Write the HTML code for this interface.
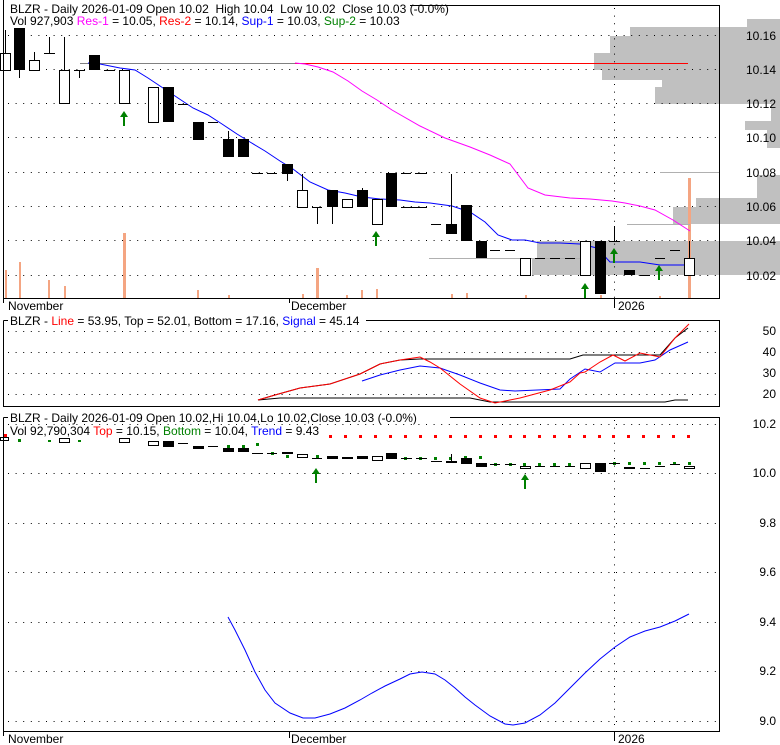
<!DOCTYPE html>
<html><head><meta charset="utf-8"><style>
html,body{margin:0;padding:0;background:#fff;}
svg{display:block;font-family:"Liberation Sans",Arial,sans-serif;font-size:12px;}
.pre{white-space:pre;}
</style></head><body>
<svg width="780" height="745" viewBox="0 0 780 745" xmlns="http://www.w3.org/2000/svg">
<rect width="780" height="745" fill="#fff"/>
<g fill="#c0c0c0">
<rect x="747" y="19" width="33" height="8"/>
<rect x="630" y="27" width="150" height="9"/>
<rect x="610" y="36" width="170" height="17"/>
<rect x="594" y="53" width="186" height="17"/>
<rect x="602" y="70" width="178" height="10"/>
<rect x="662" y="80" width="118" height="7"/>
<rect x="655" y="87" width="125" height="17"/>
<rect x="771" y="104" width="9" height="17"/>
<rect x="745" y="121" width="35" height="9"/>
<rect x="767" y="130" width="13" height="18"/>
<rect x="757" y="175" width="23" height="23"/>
<rect x="696" y="198" width="84" height="9"/>
<rect x="673" y="207" width="107" height="17"/>
<rect x="537" y="241" width="243" height="17"/>
<rect x="532" y="258" width="248" height="17"/>
</g>
<g stroke="#000" stroke-dasharray="1 6.6" stroke-width="1">
<line x1="8" y1="35.5" x2="719" y2="35.5"/>
<line x1="8" y1="69.5" x2="719" y2="69.5"/>
<line x1="8" y1="103.5" x2="719" y2="103.5"/>
<line x1="8" y1="137.5" x2="719" y2="137.5"/>
<line x1="8" y1="172.5" x2="719" y2="172.5"/>
<line x1="8" y1="206.5" x2="719" y2="206.5"/>
<line x1="8" y1="240.5" x2="719" y2="240.5"/>
<line x1="8" y1="275.5" x2="719" y2="275.5"/>
<line x1="614.5" y1="8" x2="614.5" y2="298"/>
</g>
<g fill="#f4a582">
<rect x="123" y="233" width="3" height="65"/>
<rect x="316" y="268" width="3" height="30"/>
<rect x="688" y="178" width="3" height="120"/>
<rect x="5" y="270" width="2" height="28"/><rect x="19" y="262" width="2" height="36"/>
<rect x="48" y="280" width="2" height="18"/><rect x="64" y="286" width="2" height="12"/>
<rect x="228" y="295" width="2" height="3"/><rect x="302" y="294" width="2" height="4"/>
<rect x="346" y="295" width="2" height="3"/><rect x="361" y="290" width="2" height="8"/>
<rect x="376" y="289" width="2" height="9"/><rect x="451" y="294" width="2" height="4"/>
<rect x="466" y="293" width="2" height="5"/><rect x="525" y="295" width="2" height="3"/>
<rect x="600" y="295" width="2" height="3"/><rect x="659" y="296" width="2" height="2"/>
<rect x="197" y="290" width="2" height="8"/>
</g>
<line x1="80" y1="63.5" x2="688" y2="63.5" stroke="#808080"/>
<line x1="295" y1="63.5" x2="688" y2="63.5" stroke="#ff0000"/>
<line x1="429" y1="258.5" x2="580" y2="258.5" stroke="#b0b0b0"/>
<line x1="627" y1="224.5" x2="690" y2="224.5" stroke="#b0b0b0"/>
<line x1="660" y1="172.5" x2="719" y2="172.5" stroke="#b0b0b0"/>
<polyline fill="none" stroke="#ff00ff" points="295,63 305,64 318,67 333,72 348,81 362,91 377,100 392,110 420,126 445,138 470,147 490,155 510,164 528,188 545,195 570,198 590,199 612,201 625,203 640,206 655,210 673,220 690,231"/>
<polyline fill="none" stroke="#0000ff" points="88,63 100,64 120,68 135,70 148,78 163,88 178,98 193,108 208,115 222,124 237,134 250,142 265,151 280,161 293,169 310,182 328,190 345,193 362,197 380,199 400,200 415,202 430,203 452,206 470,212 485,222 498,235 512,240 525,240 540,243 560,243 580,244 597,248 610,262 640,262 660,265 690,265"/>
<g stroke="#000" stroke-width="1">
<line x1="5.5" y1="30" x2="5.5" y2="53"/>
<line x1="19.5" y1="70" x2="19.5" y2="78"/>
<line x1="34.5" y1="52" x2="34.5" y2="60"/>
<line x1="49.5" y1="37" x2="49.5" y2="53"/><line x1="44" y1="53.5" x2="55" y2="53.5"/>
<line x1="64.5" y1="37" x2="64.5" y2="70"/>
<line x1="79.5" y1="70" x2="79.5" y2="78"/><line x1="74" y1="70.5" x2="85" y2="70.5"/>
<line x1="104" y1="70.5" x2="115" y2="70.5"/>
<line x1="178" y1="104.5" x2="188" y2="104.5"/>
<line x1="208" y1="122.5" x2="218" y2="122.5"/>
<line x1="228.5" y1="131" x2="228.5" y2="139"/>
<line x1="252" y1="173.5" x2="263" y2="173.5"/>
<line x1="267" y1="173.5" x2="277" y2="173.5"/>
<line x1="287.5" y1="174" x2="287.5" y2="181"/>
<line x1="302.5" y1="174" x2="302.5" y2="190"/>
<line x1="312" y1="207.5" x2="322" y2="207.5"/><line x1="317.5" y1="207" x2="317.5" y2="224"/>
<line x1="332.5" y1="207" x2="332.5" y2="224"/>
<line x1="362.5" y1="188" x2="362.5" y2="190"/>
<line x1="401" y1="207.5" x2="427" y2="207.5"/>
<line x1="401" y1="173.5" x2="411" y2="173.5"/>
<line x1="415" y1="173.5" x2="427" y2="173.5"/>
<line x1="431" y1="224.5" x2="441" y2="224.5"/>
<line x1="451.5" y1="174" x2="451.5" y2="224"/>
<line x1="490" y1="250.5" x2="500" y2="250.5"/><line x1="505" y1="250.5" x2="515" y2="250.5"/>
<line x1="535" y1="258.5" x2="545" y2="258.5"/><line x1="550" y1="258.5" x2="560" y2="258.5"/><line x1="565" y1="258.5" x2="575" y2="258.5"/>
<line x1="614.5" y1="226" x2="614.5" y2="241"/><line x1="609" y1="241.5" x2="620" y2="241.5"/>
<line x1="640" y1="275.5" x2="650" y2="275.5"/>
<line x1="655" y1="258.5" x2="665" y2="258.5"/>
<line x1="670" y1="250.5" x2="680" y2="250.5"/>
<line x1="689.5" y1="241" x2="689.5" y2="258"/>
</g>
<g stroke="#000" fill="#fff">
<rect x="0.5" y="53.5" width="10" height="17"/>
<rect x="29.5" y="60.5" width="10" height="10"/>
<rect x="59.5" y="70.5" width="10" height="33"/>
<rect x="119.5" y="70.5" width="10" height="33"/>
<rect x="148.5" y="87.5" width="10" height="35"/>
<rect x="297.5" y="190.5" width="10" height="17"/>
<rect x="342.5" y="199.5" width="10" height="8"/>
<rect x="372.5" y="199.5" width="10" height="25"/>
<rect x="520.5" y="258.5" width="10" height="17"/>
<rect x="580.5" y="241.5" width="10" height="34"/>
<rect x="684.5" y="258.5" width="10" height="17"/>
</g>
<g fill="#000">
<rect x="14" y="28" width="11" height="42"/>
<rect x="89" y="55" width="11" height="15"/>
<rect x="163" y="87" width="11" height="35"/>
<rect x="193" y="122" width="11" height="18"/>
<rect x="223" y="139" width="11" height="18"/>
<rect x="238" y="139" width="11" height="18"/>
<rect x="282" y="164" width="11" height="10"/>
<rect x="327" y="190" width="11" height="17"/>
<rect x="357" y="190" width="11" height="17"/>
<rect x="386" y="173" width="11" height="34"/>
<rect x="446" y="224" width="11" height="10"/>
<rect x="461" y="205" width="11" height="36"/>
<rect x="476" y="241" width="11" height="17"/>
<rect x="595" y="241" width="11" height="53"/>
<rect x="624" y="270" width="11" height="5"/>
</g>
<g fill="#008000">
<path d="M124,111 l-4,6 h3 v9 h2 v-9 h3 z"/>
<path d="M376,231 l-4,6 h3 v9 h2 v-9 h3 z"/>
<path d="M585,283 l-4,6 h3 v9 h2 v-9 h3 z"/>
<path d="M614,248 l-4,6 h3 v9 h2 v-9 h3 z"/>
<path d="M659,265 l-4,6 h3 v9 h2 v-9 h3 z"/>
</g>
<path d="M3.5,0 V298.5 H719.5 V5.5 H410" fill="none" stroke="#000"/>
<text x="10" y="13" class="pre">BLZR - Daily 2026-01-09 Open 10.02  High 10.04  Low 10.02  Close 10.03 (-0.0%)</text>
<text x="10" y="25">Vol 927,903 <tspan fill="#ff00ff">Res-1</tspan> = 10.05, <tspan fill="#ff0000">Res-2</tspan> = 10.14, <tspan fill="#0000ff">Sup-1</tspan> = 10.03, <tspan fill="#008000">Sup-2</tspan> = 10.03</text>
<g text-anchor="end" fill="#000">
<text x="776" y="40">10.16</text><text x="776" y="74">10.14</text><text x="776" y="108">10.12</text>
<text x="776" y="142">10.10</text><text x="776" y="177">10.08</text><text x="776" y="211">10.06</text>
<text x="776" y="245">10.04</text><text x="776" y="280">10.02</text>
</g>
<g stroke="#000"><line x1="3.5" y1="298" x2="3.5" y2="303"/><line x1="289.5" y1="298" x2="289.5" y2="303"/><line x1="614.5" y1="298" x2="614.5" y2="308"/></g>
<text x="8" y="310">November</text><text x="291" y="310">December</text><text x="618" y="310">2026</text>

<g stroke="#000" stroke-dasharray="1 6.6">
<line x1="8" y1="331.5" x2="719" y2="331.5"/><line x1="8" y1="352.5" x2="719" y2="352.5"/>
<line x1="8" y1="373.5" x2="719" y2="373.5"/><line x1="8" y1="394.5" x2="719" y2="394.5"/>
</g>
<polyline fill="none" stroke="#000" points="258,400 280,398 470,398 490,402 665,402 675,400 688,400"/>
<polyline fill="none" stroke="#000" points="258,400 275,395 300,388 330,384 360,374 380,364 400,360 420,359 570,359 583,355 660,355 675,338 688,328"/>
<polyline fill="none" stroke="#0000ff" points="362,381 380,375 400,370 420,366 440,368 460,375 480,383 500,390 515,391 560,389 570,379 585,369 600,372 615,363 640,363 655,360 670,350 688,342"/>
<polyline fill="none" stroke="#ff0000" points="258,400 275,395 300,388 330,384 360,374 380,364 400,360 420,357 430,362 440,368 460,384 480,398 495,403 520,398 550,390 570,382 580,373 585,372 600,362 613,355 625,361 640,353 660,357 675,338 689,324"/>
<path d="M3.5,320.5 V406.5 H719.5 V320.5 H3.5" fill="none" stroke="#000"/>
<rect x="8" y="312" width="358" height="14" fill="#fff"/>
<text x="10" y="325">BLZR - <tspan fill="#ff0000">Line</tspan> = 53.95, Top = 52.01, Bottom = 17.16, <tspan fill="#0000ff">Signal</tspan> = 45.14</text>
<g text-anchor="end"><text x="776" y="335">50</text><text x="776" y="356">40</text><text x="776" y="377">30</text><text x="776" y="398">20</text></g>

<g stroke="#000" stroke-dasharray="1 6.6">
<line x1="8" y1="424.5" x2="719" y2="424.5"/><line x1="8" y1="473.5" x2="719" y2="473.5"/>
<line x1="8" y1="523.5" x2="719" y2="523.5"/><line x1="8" y1="572.5" x2="719" y2="572.5"/>
<line x1="8" y1="622.5" x2="719" y2="622.5"/><line x1="8" y1="671.5" x2="719" y2="671.5"/>
<line x1="8" y1="721.5" x2="719" y2="721.5"/>
<line x1="614.5" y1="420" x2="614.5" y2="731"/>
</g>
<polyline fill="none" stroke="#0000ff" points="228,617 235,630 245,650 255,672 265,690 275,703 290,713 303,718 315,718 330,714 345,708 360,700 372,693 385,686 400,679 410,674 422,672 435,674 445,680 455,688 465,697 475,705 490,716 505,724 513,725 525,723 540,715 555,703 570,688 585,673 600,659 615,647 630,637 645,631 660,627 675,621 689,614"/>
<g fill="#ff0000">
<rect x="329" y="435" width="3" height="3"/><rect x="344" y="435" width="3" height="3"/><rect x="359" y="435" width="3" height="3"/>
<rect x="374" y="435" width="3" height="3"/><rect x="389" y="435" width="3" height="3"/><rect x="404" y="435" width="3" height="3"/>
<rect x="419" y="435" width="3" height="3"/><rect x="434" y="435" width="3" height="3"/><rect x="449" y="435" width="3" height="3"/>
<rect x="464" y="435" width="3" height="3"/><rect x="479" y="435" width="3" height="3"/><rect x="494" y="435" width="3" height="3"/>
<rect x="509" y="435" width="3" height="3"/><rect x="523" y="435" width="3" height="3"/><rect x="538" y="435" width="3" height="3"/>
<rect x="553" y="435" width="3" height="3"/><rect x="568" y="435" width="3" height="3"/><rect x="583" y="435" width="3" height="3"/>
<rect x="598" y="435" width="3" height="3"/><rect x="612" y="435" width="3" height="3"/><rect x="627" y="435" width="3" height="3"/>
<rect x="642" y="435" width="3" height="3"/><rect x="657" y="435" width="3" height="3"/><rect x="672" y="435" width="3" height="3"/>
<rect x="687" y="435" width="3" height="3"/><rect x="4" y="434" width="3" height="3"/>
</g>
<g fill="#008000">
<rect x="18" y="439" width="3" height="3"/><rect x="48" y="440" width="3" height="2"/><rect x="78" y="440" width="3" height="2"/>
<rect x="227" y="445" width="3" height="3"/><rect x="242" y="445" width="3" height="3"/><rect x="256" y="443" width="3" height="3"/>
<rect x="271" y="452" width="3" height="3"/><rect x="286" y="455" width="3" height="3"/><rect x="316" y="455" width="3" height="3"/>
<rect x="389" y="456" width="3" height="3"/><rect x="404" y="457" width="3" height="3"/><rect x="419" y="457" width="3" height="3"/>
<rect x="434" y="457" width="3" height="3"/><rect x="449" y="457" width="3" height="3"/><rect x="464" y="456" width="3" height="3"/>
<rect x="479" y="456" width="3" height="3"/><rect x="494" y="463" width="3" height="3"/><rect x="509" y="463" width="3" height="3"/>
<rect x="523" y="463" width="3" height="3"/><rect x="538" y="463" width="3" height="3"/><rect x="553" y="463" width="3" height="3"/>
<rect x="568" y="463" width="3" height="3"/><rect x="613" y="462" width="3" height="3"/><rect x="628" y="462" width="3" height="3"/>
<rect x="643" y="462" width="3" height="3"/><rect x="658" y="462" width="3" height="3"/><rect x="673" y="462" width="3" height="3"/>
<rect x="688" y="462" width="3" height="3"/>
<path d="M316,468 l-4,6 h3 v9 h2 v-9 h3 z"/>
<path d="M525,474 l-4,6 h3 v9 h2 v-9 h3 z"/>
</g>
<g stroke="#000" fill="#fff">
<rect x="0.5" y="437.5" width="8" height="3"/>
<rect x="59.5" y="438.5" width="10" height="4"/><rect x="119.5" y="438.5" width="10" height="4"/>
<rect x="148.5" y="441.5" width="10" height="4"/><rect x="297.5" y="454.5" width="10" height="3"/>
<rect x="372.5" y="456.5" width="10" height="4"/><rect x="520.5" y="466.5" width="10" height="2"/>
<rect x="580.5" y="463.5" width="10" height="5"/><rect x="684.5" y="466.5" width="10" height="2"/>
</g>
<g fill="#000">
<rect x="163" y="441" width="11" height="6"/><rect x="193" y="446" width="11" height="3"/>
<rect x="223" y="448" width="11" height="4"/><rect x="238" y="448" width="11" height="4"/>
<rect x="282" y="452" width="11" height="2"/><rect x="327" y="456" width="11" height="3"/>
<rect x="342" y="457" width="11" height="2"/><rect x="357" y="456" width="11" height="3"/>
<rect x="386" y="453" width="11" height="6"/><rect x="446" y="461" width="11" height="2"/>
<rect x="461" y="458" width="11" height="6"/><rect x="476" y="463" width="11" height="4"/>
<rect x="595" y="463" width="11" height="9"/><rect x="624" y="467" width="11" height="2"/>
</g>
<g stroke="#000">
<line x1="178" y1="443.5" x2="188" y2="443.5"/><line x1="208" y1="446.5" x2="218" y2="446.5"/>
<line x1="252" y1="453.5" x2="263" y2="453.5"/><line x1="267" y1="453.5" x2="277" y2="453.5"/>
<line x1="312" y1="458.5" x2="322" y2="458.5"/><line x1="401" y1="458.5" x2="412" y2="458.5"/>
<line x1="416" y1="458.5" x2="427" y2="458.5"/><line x1="431" y1="461.5" x2="442" y2="461.5"/>
<line x1="451.5" y1="454" x2="451.5" y2="461"/>
<line x1="490" y1="464.5" x2="500" y2="464.5"/><line x1="505" y1="464.5" x2="516" y2="464.5"/>
<line x1="535" y1="466.5" x2="545" y2="466.5"/><line x1="550" y1="466.5" x2="560" y2="466.5"/><line x1="565" y1="466.5" x2="575" y2="466.5"/>
<line x1="609" y1="463.5" x2="620" y2="463.5"/><line x1="640" y1="468.5" x2="650" y2="468.5"/>
<line x1="655" y1="466.5" x2="665" y2="466.5"/><line x1="670" y1="464.5" x2="680" y2="464.5"/>
</g>
<path d="M3.5,417.5 V731.5 H719.5 V417.5 H3.5" fill="none" stroke="#000"/>
<rect x="8" y="410" width="442" height="13" fill="#fff"/>
<text x="10" y="422">BLZR - Daily 2026-01-09 Open 10.02,Hi 10.04,Lo 10.02,Close 10.03 (-0.0%)</text>
<text x="10" y="435">Vol 92,790,304 <tspan fill="#ff0000">Top</tspan> = 10.15, <tspan fill="#008000">Bottom</tspan> = 10.04, <tspan fill="#0000ff">Trend</tspan> = 9.43</text>
<g text-anchor="end"><text x="776" y="428">10.2</text><text x="776" y="477">10.0</text><text x="776" y="527">9.8</text>
<text x="776" y="576">9.6</text><text x="776" y="626">9.4</text><text x="776" y="675">9.2</text><text x="776" y="725">9.0</text></g>
<g stroke="#000"><line x1="3.5" y1="731" x2="3.5" y2="736"/><line x1="289.5" y1="731" x2="289.5" y2="738"/><line x1="614.5" y1="731" x2="614.5" y2="741"/></g>
<text x="8" y="743">November</text><text x="291" y="743">December</text><text x="618" y="743">2026</text>
</svg>
</body></html>
